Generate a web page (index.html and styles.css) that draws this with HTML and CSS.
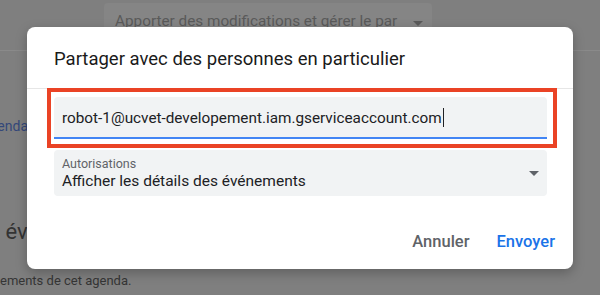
FILE: index.html
```html
<!DOCTYPE html>
<html lang="fr">
<head>
  <meta charset="UTF-8" />
  <title>Partager avec des personnes en particulier</title>
  <link rel="stylesheet" href="styles.css">
</head>
<body>
  <div class="page">
    <div class="page-top">
      <div class="perm-select">
        <span class="perm-text">Apporter des modifications et gérer le par</span>
        <span class="caret"></span>
      </div>
    </div>
    <div class="page-link"><span>Paramètres de l'agenda</span></div>
    <div class="page-heading"><span class="lead">Intégrer des</span> événements</div>
    <div class="page-note"><span class="lead">Affiche tous les évén</span>ements de cet agenda.</div>
  </div>

  <div class="dialog">
    <h2 class="dialog-title">Partager avec des personnes en particulier</h2>
    <div class="dialog-body">
      <div class="highlight">
        <div class="field field-input">
          <span class="field-value">robot-1@ucvet-developement.iam.gserviceaccount.com</span><span class="cursor"></span>
        </div>
      </div>
      <div class="field field-select">
        <div>
          <div class="field-label">Autorisations</div>
          <div class="field-value">Afficher les détails des événements</div>
        </div>
        <span class="caret caret-dark"></span>
      </div>
    </div>
    <div class="dialog-actions">
      <button class="btn btn-cancel">Annuler</button>
      <button class="btn btn-send">Envoyer</button>
    </div>
  </div>
</body>
</html>
```

FILE: styles.css
```css
* {
  margin: 0;
  padding: 0;
  box-sizing: border-box;
}

body {
  font-family: Roboto, "Liberation Sans", Arial, sans-serif;
  background-color: #7f7f7f;
  width: 600px;
  height: 295px;
  overflow: hidden;
  position: relative;
}

/* dimmed page behind the dialog */
.page {
  height: 295px;
  color: #2e2e2e;
}

.page-top {
  height: 51px;
  padding-top: 3px;
  padding-left: 104px;
  border-bottom: 1px solid #8a8a8a;
}

.perm-select {
  width: 328px;
  height: 44px;
  background-color: #858585;
  border-radius: 4px;
  display: flex;
  align-items: flex-start;
  justify-content: space-between;
  padding: 9px 9px 0 11px;
  font-size: 15.3px;
  color: #5a5a5a;
  white-space: nowrap;
}

.perm-text {
  width: 284px;
  overflow: hidden;
}

.caret {
  width: 0;
  height: 0;
  border-left: 5px solid transparent;
  border-right: 5px solid transparent;
  border-top: 5px solid #5a5a5a;
  margin-top: 9px;
}

/* texts cut by the left edge: their ends are aligned, the start overflows */
.page-link {
  display: flex;
  justify-content: flex-end;
  width: 28px;
  margin-top: 67px;
  font-size: 14px;
  color: #34487a;
  white-space: nowrap;
}

.lead {
  display: inline-flex;
  justify-content: flex-end;
  width: 0;
  white-space: nowrap;
}

.page-heading {
  margin-top: 85px;
  font-size: 22px;
  color: #333;
  white-space: nowrap;
}

.page-note {
  margin-top: 29px;
  font-size: 13px;
  color: #353535;
  white-space: nowrap;
}

/* dialog */
.dialog {
  position: absolute;
  left: 27px;
  top: 27px;
  width: 546px;
  height: 242px;
  background-color: #fff;
  border-radius: 8px;
  box-shadow: 0 4px 12px rgba(0, 0, 0, 0.25);
}

.dialog-title {
  font-size: 18.5px;
  font-weight: 400;
  line-height: 24px;
  color: #1a1a1a;
  padding: 20px 27px 17px;
  border-bottom: 1px solid #e6e6e6;
}

.dialog-body {
  padding-left: 20px;
}

.highlight {
  width: 510px;
  height: 60px;
  margin-top: -1px;
  border: 4px solid #ea4325;
  padding: 5px 6px 5px 3px;
}

.field {
  background-color: #f1f3f4;
  border-radius: 4px 4px 0 0;
  color: #202124;
}

.field-input {
  height: 42px;
  border-bottom: 2px solid #4285f4;
  display: flex;
  align-items: center;
  padding-left: 8px;
  padding-top: 1px;
  font-size: 15.3px;
}

.cursor {
  width: 1px;
  height: 19px;
  background-color: #202124;
  margin-left: 1px;
}

.field-select {
  width: 493px;
  height: 46px;
  margin-top: 2px;
  margin-left: 7px;
  border-radius: 4px;
  display: flex;
  align-items: flex-start;
  justify-content: space-between;
  padding: 6px 8px 0 8px;
}

.field-label {
  font-size: 12.5px;
  line-height: 15px;
  color: #5f6368;
}

.field-select .field-value {
  font-size: 15.5px;
  line-height: 20px;
}

.caret-dark {
  border-top-color: #5f6368;
  margin-top: 15px;
}

.dialog-actions {
  display: flex;
  justify-content: flex-end;
  gap: 27px;
  padding: 36px 18px 0 0;
}

.btn {
  background: none;
  border: none;
  font-family: Roboto, "Liberation Sans", Arial, sans-serif;
  font-size: 16.5px;
  font-weight: 500;
  line-height: 20px;
  cursor: pointer;
}

.btn-cancel {
  color: #5f6368;
}

.btn-send {
  color: #1a73e8;
}
```
